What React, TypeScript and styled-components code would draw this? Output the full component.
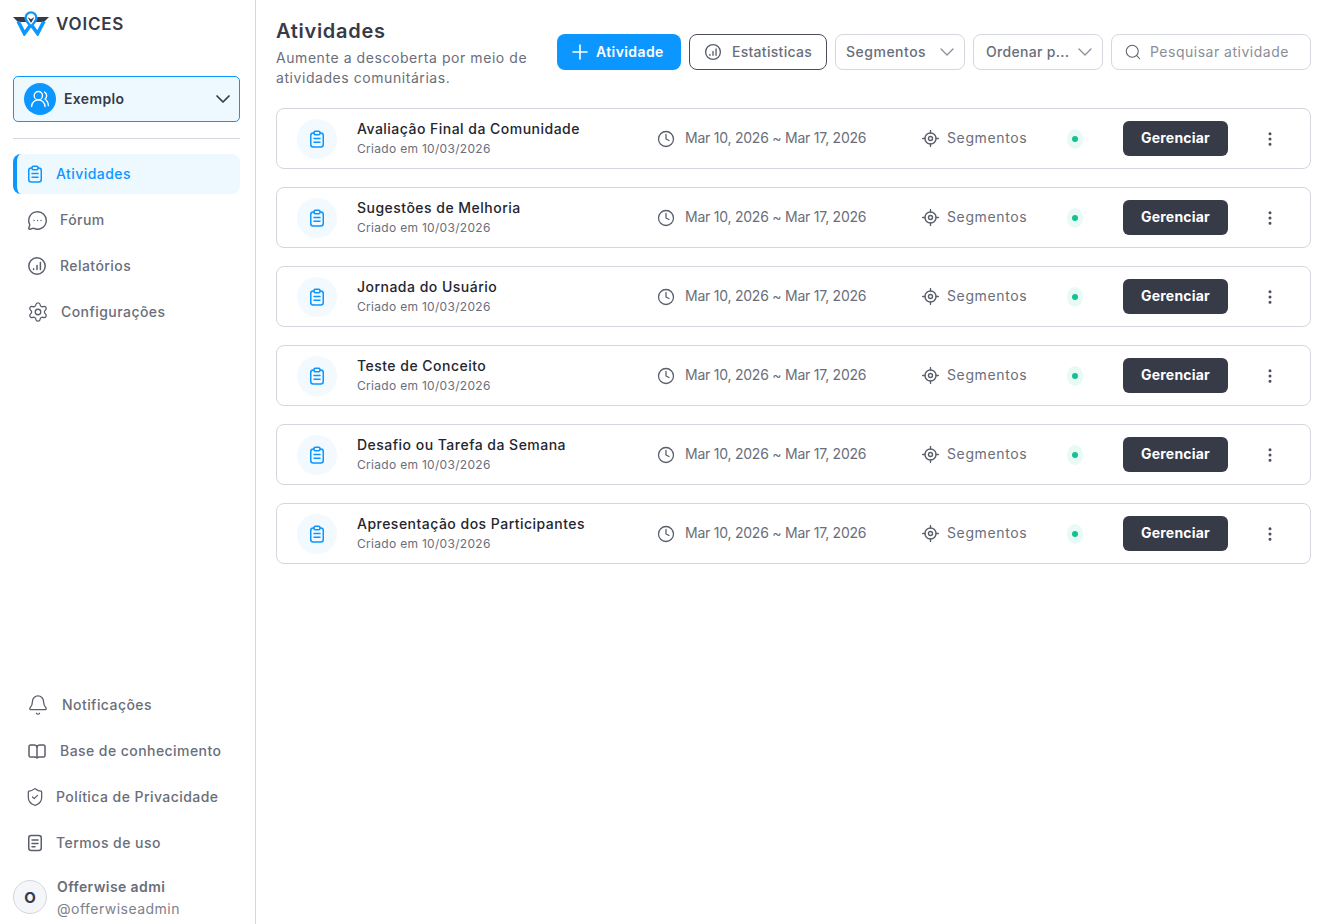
import React from "react";
import styled, { createGlobalStyle } from "styled-components";
import {
  Bell,
  ChevronDown,
  Clock,
  EllipsisVertical,
  MessageCircleMore,
  Plus,
  Search,
  Settings,
  ShieldCheck,
  UsersRound,
} from "lucide-react";

const Global = createGlobalStyle`
  html, body { margin: 0; padding: 0; background: #fff; }
  body { font-family: Inter, "Noto Sans", sans-serif; color: #373a47; }
  * { box-sizing: border-box; }
`;

const Page = styled.div`
  display: flex;
  width: 1329px;
  height: 924px;
  overflow: hidden;
`;

const Sidebar = styled.aside`
  width: 256px;
  height: 924px;
  flex: none;
  display: flex;
  flex-direction: column;
  padding: 11px 15px 0 13px;
  border-right: 1px solid #d5d7de;
`;

const Brand = styled.div`
  display: flex;
  align-items: center;
  gap: 7px;
  height: 25px;
  margin-bottom: 40px;
`;

const BrandName = styled.span`
  font-size: 17px;
  font-weight: 600;
  letter-spacing: 0.8px;
  color: #373a47;
`;

const WorkspaceSelect = styled.div`
  height: 46px;
  display: flex;
  align-items: center;
  gap: 8px;
  padding: 0 4px 0 10px;
  border: 1px solid #0b97ff;
  border-radius: 5px;
  background: #eef8ff;
  svg { flex: none; }
`;

const WorkspaceAvatar = styled.div`
  width: 32px;
  height: 32px;
  border-radius: 50%;
  background: #0b97ff;
  color: #fff;
  display: flex;
  align-items: center;
  justify-content: center;
`;

const WorkspaceName = styled.span`
  flex: 1;
  margin-bottom: 2px;
  font-size: 14px;
  font-weight: 600;
  letter-spacing: 0.35px;
  color: #373a47;
`;

const Divider = styled.hr`
  width: 100%;
  margin: 16px 0 15px;
  border: 0;
  border-top: 1px solid #d5d7de;
`;

const NavList = styled.nav`
  display: flex;
  flex-direction: column;
  gap: 6px;
`;

const NavItem = styled.a<{ $active?: boolean; $gap: number; $pad: number }>`
  height: 40px;
  display: flex;
  align-items: center;
  gap: ${(p) => p.$gap}px;
  padding-left: ${(p) => p.$pad}px;
  border-radius: 8px;
  font-size: 14px;
  font-weight: 500;
  color: ${(p) => (p.$active ? "#0b97ff" : "#6a6e7b")};
  background: ${(p) => (p.$active ? "#eef8ff" : "transparent")};
  border-left: ${(p) => (p.$active ? "4px solid #0b97ff" : "0")};
  svg {
    flex: none;
    color: ${(p) => (p.$active ? "#0b97ff" : "#5a5e6b")};
  }
`;

const NavLabel = styled.span`
  margin-bottom: 2px;
  letter-spacing: 0.44px;
`;

const Spacer = styled.div`
  flex: 1;
`;

const UserRow = styled.div`
  display: flex;
  align-items: center;
  gap: 10px;
  height: 46px;
  margin-top: 11px;
  margin-bottom: 4px;
`;

const UserAvatar = styled.div`
  width: 34px;
  height: 34px;
  flex: none;
  border-radius: 50%;
  border: 1px solid #d5d7de;
  background: #f5f6f9;
  display: flex;
  align-items: center;
  justify-content: center;
  font-size: 15px;
  font-weight: 700;
  color: #373a47;
`;

const UserText = styled.div`
  display: flex;
  flex-direction: column;
  gap: 3px;
`;

const UserName = styled.span`
  font-size: 14px;
  font-weight: 600;
  letter-spacing: 0.4px;
  color: #6a6e7b;
  line-height: 19px;
`;

const UserHandle = styled.span`
  font-size: 14px;
  letter-spacing: 0.48px;
  color: #7d818d;
  line-height: 19px;
`;

const Main = styled.main`
  flex: 1;
  min-width: 0;
  padding: 0 18px 0 20px;
`;

const Header = styled.header`
  display: flex;
  justify-content: space-between;
  align-items: flex-start;
  height: 108px;
`;

const TitleBlock = styled.div`
  padding-top: 18px;
`;

const Title = styled.h1`
  margin: 0 0 4px;
  font-size: 20px;
  line-height: 26px;
  font-weight: 600;
  letter-spacing: 0.7px;
  color: #373a47;
`;

const Subtitle = styled.p`
  margin: 0;
  width: 270px;
  font-size: 14px;
  line-height: 20px;
  letter-spacing: 0.56px;
  color: #6a6e7b;
`;

const Toolbar = styled.div`
  display: flex;
  gap: 8px;
  padding-top: 34px;
`;

const PrimaryButton = styled.button`
  width: 124px;
  height: 36px;
  display: flex;
  align-items: center;
  gap: 4px;
  padding: 0 0 0 11px;
  border: 0;
  border-radius: 8px;
  background: #0b97ff;
  color: #fff;
  font: 600 14px Inter, sans-serif;
  letter-spacing: 0.4px;
`;

const ButtonLabel = styled.span`
  margin-bottom: 2px;
`;

const OutlineButton = styled.button`
  width: 138px;
  height: 36px;
  display: flex;
  align-items: center;
  justify-content: center;
  gap: 10px;
  padding: 0;
  border: 1px solid #4b4e5b;
  border-radius: 8px;
  background: #fff;
  color: #6a6e7b;
  font: 500 14px Inter, sans-serif;
  letter-spacing: 0.3px;
  svg { color: #5a5e6b; }
`;

const SelectBox = styled.div<{ $pad: number; $spacing: number }>`
  width: 130px;
  height: 36px;
  display: flex;
  align-items: center;
  justify-content: space-between;
  padding: 0 5px 0 ${(p) => p.$pad}px;
  border: 1px solid #d5d7de;
  border-radius: 8px;
  color: #6a6e7b;
  font-size: 14px;
  font-weight: 500;
  letter-spacing: ${(p) => p.$spacing}px;
  svg { color: #8a8e99; }
`;

const SearchBox = styled.div`
  width: 200px;
  height: 36px;
  display: flex;
  align-items: center;
  gap: 8px;
  padding: 0 12px;
  border: 1px solid #d5d7de;
  border-radius: 8px;
  color: #8a8e99;
  font-size: 14px;
  letter-spacing: 0.5px;
  svg { color: #5e626e; flex: none; }
`;

const CardList = styled.section`
  display: flex;
  flex-direction: column;
  gap: 18px;
`;

const Card = styled.article`
  height: 61px;
  display: flex;
  align-items: center;
  padding-left: 20px;
  border: 1px solid #d5d7de;
  border-radius: 8px;
  background: #fff;
`;

const CardIcon = styled.div`
  width: 40px;
  height: 40px;
  flex: none;
  margin-right: 20px;
  border-radius: 50%;
  background: #f2f9ff;
  color: #0b97ff;
  display: flex;
  align-items: center;
  justify-content: center;
`;

const CardText = styled.div`
  width: 300px;
  flex: none;
  display: flex;
  flex-direction: column;
`;

const CardTitle = styled.span`
  margin-top: -1px;
  font-size: 14px;
  line-height: 20px;
  font-weight: 500;
  letter-spacing: 0.48px;
  color: #24262f;
`;

const CardSub = styled.span`
  margin-top: 1px;
  font-size: 12px;
  line-height: 18px;
  letter-spacing: 0.3px;
  color: #6a6e7b;
`;

const MetaCol = styled.div<{ $width: number; $gap: number; $spacing: number }>`
  width: ${(p) => p.$width}px;
  flex: none;
  display: flex;
  align-items: center;
  gap: ${(p) => p.$gap}px;
  font-size: 14px;
  letter-spacing: ${(p) => p.$spacing}px;
  color: #6a6e7b;
  svg { color: #5a5e6b; flex: none; }
`;

const StatusHalo = styled.div`
  width: 16px;
  height: 20px;
  flex: none;
  margin: 0 40px 0 1px;
  border-radius: 50%;
  background: #e9faf5;
  display: flex;
  align-items: center;
  justify-content: center;
`;

const StatusDot = styled.span`
  width: 6px;
  height: 6px;
  border-radius: 50%;
  background: #14c191;
`;

const ManageButton = styled.button`
  width: 105px;
  height: 35px;
  flex: none;
  padding: 0 0 2px;
  border: 0;
  border-radius: 6px;
  background: #373a47;
  color: #fff;
  font: 700 14px Inter, sans-serif;
  letter-spacing: 0.2px;
`;

const MoreButton = styled.div`
  width: 82px;
  flex: none;
  display: flex;
  justify-content: center;
  padding-left: 2px;
  color: #4b4e5b;
`;

const ChartCircle = ({ size = 20 }: { size?: number }) => (
  <svg width={size} height={size} viewBox="0 0 20 20" fill="none" stroke="currentColor" strokeWidth="1.5" strokeLinecap="round">
    <circle cx="10" cy="10" r="8.2" />
    <path d="M6.6 13.6v-.8M10 13.6V9.4M13.4 13.6V6.6" />
  </svg>
);

const Target = () => (
  <svg width="17" height="17" viewBox="0 0 16 16" fill="none" stroke="currentColor" strokeWidth="1.3" strokeLinecap="round">
    <circle cx="8" cy="8" r="5.2" />
    <circle cx="8" cy="8" r="1.9" />
    <path d="M8 .6v2.2M8 13.2v2.2M.6 8h2.2M13.2 8h2.2" />
  </svg>
);

const Clipboard = () => (
  <svg width="18" height="18" viewBox="0 0 18 18" fill="none" stroke="currentColor" strokeWidth="1.5" strokeLinecap="round">
    <path d="M6 3H5.2a2.5 2.5 0 0 0-2.45 2.5v9A2.5 2.5 0 0 0 5.2 17h7.6a2.5 2.5 0 0 0 2.45-2.5v-9A2.5 2.5 0 0 0 12.8 3H12" />
    <rect x="6" y="1.2" width="6" height="3.6" rx="1.2" />
    <path d="M6 8.6h6M6 12.2h6" />
  </svg>
);

const TermsDoc = () => (
  <svg width="18" height="18" viewBox="0 0 18 18" fill="none" stroke="currentColor" strokeWidth="1.5" strokeLinecap="round">
    <rect x="2.75" y="1.5" width="12.5" height="15" rx="2.4" />
    <path d="M6 6h6M6 9.4h6M6 12.8h3" />
  </svg>
);

const Book = () => (
  <svg width="20" height="20" viewBox="0 0 20 20" fill="none" stroke="currentColor" strokeWidth="1.5" strokeLinejoin="round">
    <path d="M10 6v10.5" />
    <path d="M2 5.6A1.6 1.6 0 0 1 3.6 4H7a3 2.4 0 0 1 3 2 3 2.4 0 0 1 3-2h3.4A1.6 1.6 0 0 1 18 5.6v8.8a1.6 1.6 0 0 1-1.6 1.6H13a3 2 0 0 0-3 .9 3 2 0 0 0-3-.9H3.6A1.6 1.6 0 0 1 2 14.4z" />
  </svg>
);

const Logo = () => (
  <svg width="36" height="25" viewBox="0 0 36 25" fill="none">
    <path d="M0 6h11.5l2.5 5H5z" fill="#373a47" />
    <path d="M36 6H24.5L22 11h9z" fill="#373a47" />
    <path d="M5.2 10.5L11.4 22.5 18 13.5 24.6 22.5 30.8 10.5" stroke="#0b97ff" strokeWidth="3.6" />
    <path d="M18 15.5c-3-3.2-5.4-5.6-5.4-8.7a5.4 5.4 0 0 1 10.8 0c0 3.1-2.4 5.5-5.4 8.7z" stroke="#0b97ff" strokeWidth="2.4" fill="#fff" />
    <path d="M14.6 6L18 8.2 21.4 6 18 12z" fill="#373a47" />
  </svg>
);

const topNav = [
  { label: "Fórum", icon: <MessageCircleMore size={21} strokeWidth={1.6} />, gap: 12, pad: 14 },
  { label: "Relatórios", icon: <ChartCircle />, gap: 13, pad: 14 },
  { label: "Configurações", icon: <Settings size={22} strokeWidth={1.4} />, gap: 12, pad: 14 },
];

const bottomNav = [
  { label: "Notificações", icon: <Bell size={22} strokeWidth={1.4} />, gap: 13, pad: 14 },
  { label: "Base de conhecimento", icon: <Book />, gap: 13, pad: 14 },
  { label: "Política de Privacidade", icon: <ShieldCheck size={20} strokeWidth={1.5} />, gap: 11, pad: 12 },
  { label: "Termos de uso", icon: <TermsDoc />, gap: 12, pad: 13 },
];

const activities = [
  "Avaliação Final da Comunidade",
  "Sugestões de Melhoria",
  "Jornada do Usuário",
  "Teste de Conceito",
  "Desafio ou Tarefa da Semana",
  "Apresentação dos Participantes",
];

export default function App() {
  return (
    <Page>
      <Global />
      <Sidebar>
        <Brand>
          <Logo />
          <BrandName>VOICES</BrandName>
        </Brand>
        <WorkspaceSelect>
          <WorkspaceAvatar>
            <UsersRound size={20} strokeWidth={1.6} />
          </WorkspaceAvatar>
          <WorkspaceName>Exemplo</WorkspaceName>
          <ChevronDown size={24} strokeWidth={1.7} />
        </WorkspaceSelect>
        <Divider />
        <NavList>
          <NavItem $active $gap={12} $pad={9}>
            <Clipboard />
            <NavLabel>Atividades</NavLabel>
          </NavItem>
          {topNav.map((n) => (
            <NavItem key={n.label} $gap={n.gap} $pad={n.pad}>
              {n.icon}
              <NavLabel>{n.label}</NavLabel>
            </NavItem>
          ))}
        </NavList>
        <Spacer />
        <NavList>
          {bottomNav.map((n) => (
            <NavItem key={n.label} $gap={n.gap} $pad={n.pad}>
              {n.icon}
              <NavLabel>{n.label}</NavLabel>
            </NavItem>
          ))}
        </NavList>
        <UserRow>
          <UserAvatar>O</UserAvatar>
          <UserText>
            <UserName>Offerwise admi</UserName>
            <UserHandle>@offerwiseadmin</UserHandle>
          </UserText>
        </UserRow>
      </Sidebar>
      <Main>
        <Header>
          <TitleBlock>
            <Title>Atividades</Title>
            <Subtitle>Aumente a descoberta por meio de atividades comunitárias.</Subtitle>
          </TitleBlock>
          <Toolbar>
            <PrimaryButton>
              <Plus size={24} strokeWidth={1.6} />
              <ButtonLabel>Atividade</ButtonLabel>
            </PrimaryButton>
            <OutlineButton>
              <ChartCircle size={18} />
              <ButtonLabel>Estatisticas</ButtonLabel>
            </OutlineButton>
            <SelectBox $pad={10} $spacing={0.5}>
              <ButtonLabel>Segmentos</ButtonLabel>
              <ChevronDown size={24} strokeWidth={1.3} />
            </SelectBox>
            <SelectBox $pad={12} $spacing={0.3}>
              <ButtonLabel>Ordenar p...</ButtonLabel>
              <ChevronDown size={24} strokeWidth={1.3} />
            </SelectBox>
            <SearchBox>
              <Search size={18} strokeWidth={1.4} />
              <ButtonLabel>Pesquisar atividade</ButtonLabel>
            </SearchBox>
          </Toolbar>
        </Header>
        <CardList>
          {activities.map((a) => (
            <Card key={a}>
              <CardIcon>
                <Clipboard />
              </CardIcon>
              <CardText>
                <CardTitle>{a}</CardTitle>
                <CardSub>Criado em 10/03/2026</CardSub>
              </CardText>
              <MetaCol $width={265} $gap={10} $spacing={-0.24}>
                <Clock size={18} strokeWidth={1.7} />
                <ButtonLabel>Mar 10, 2026 ~ Mar 17, 2026</ButtonLabel>
              </MetaCol>
              <MetaCol $width={144} $gap={8} $spacing={0.62}>
                <Target />
                <ButtonLabel>Segmentos</ButtonLabel>
              </MetaCol>
              <StatusHalo>
                <StatusDot />
              </StatusHalo>
              <ManageButton>Gerenciar</ManageButton>
              <MoreButton>
                <EllipsisVertical size={18} strokeWidth={2} />
              </MoreButton>
            </Card>
          ))}
        </CardList>
      </Main>
    </Page>
  );
}
